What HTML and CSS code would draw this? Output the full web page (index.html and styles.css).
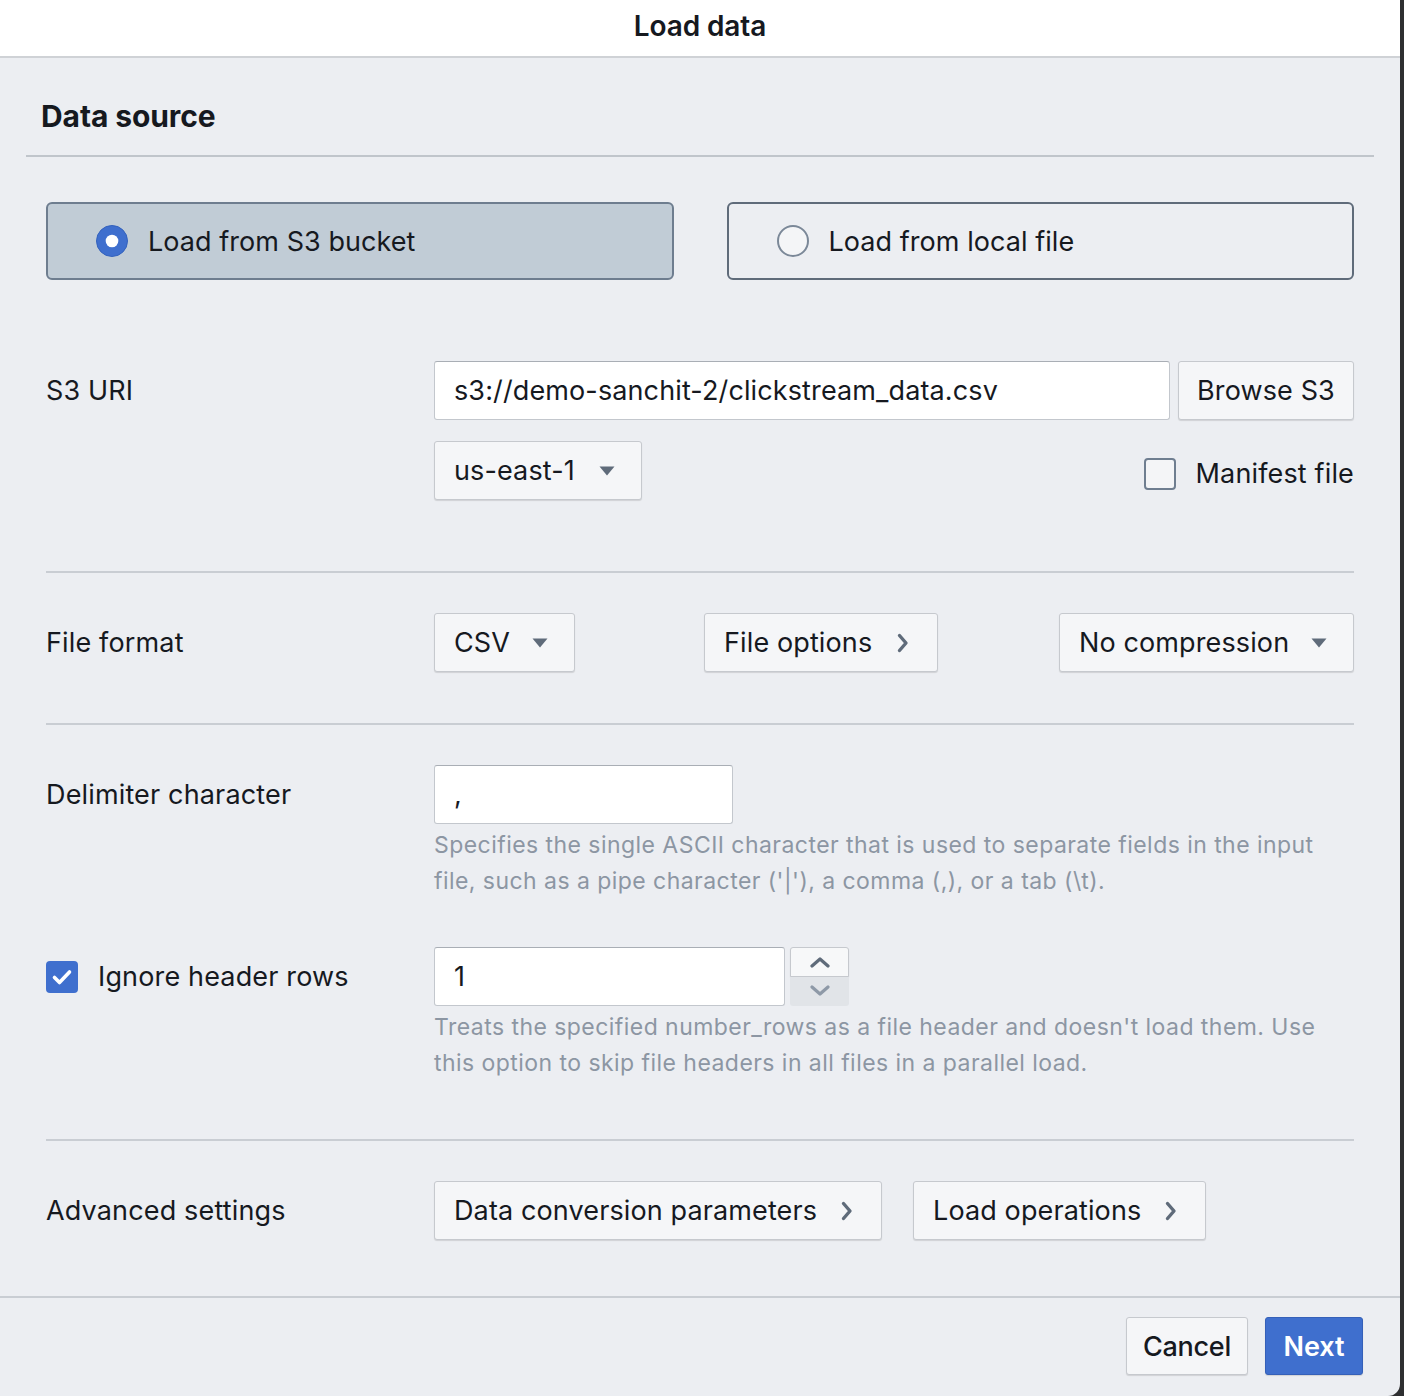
FILE: index.html
```html
<!DOCTYPE html>
<html lang="en">
<head>
<meta charset="utf-8">
<title>Load data</title>
<link rel="stylesheet" href="styles.css">
</head>
<body>
<div class="dialog">
  <header class="titlebar">Load data</header>
  <main class="content">
    <h2 class="section-title">Data source</h2>
    <div class="section-body">
      <div class="source-choice">
        <div class="choice selected">
          <svg class="radio" width="32" height="32" viewBox="0 0 32 32"><circle cx="16" cy="16" r="15.5" fill="#3f6fce" stroke="#3462bd" stroke-width="1"/><circle cx="16" cy="16" r="6.3" fill="#ffffff"/></svg>
          <span>Load from S3 bucket</span>
        </div>
        <div class="choice">
          <svg class="radio" width="32" height="32" viewBox="0 0 32 32"><circle cx="16" cy="16" r="15" fill="#f4f5f7" stroke="#7b8898" stroke-width="2"/></svg>
          <span>Load from local file</span>
        </div>
      </div>

      <div class="row row-s3">
        <div class="label">S3 URI</div>
        <div class="field">
          <div class="line">
            <div class="input uri">s3://demo-sanchit-2/clickstream_data.csv</div>
            <div class="btn browse">Browse S3</div>
          </div>
          <div class="line line-second">
            <div class="btn select region"><span>us-east-1</span>
              <svg class="caret" width="16" height="10" viewBox="0 0 16 10"><path d="M0.5 0.5h15L8 9.5z" fill="#5f6b7a"/></svg>
            </div>
            <div class="check manifest">
              <span class="box"></span>
              <span>Manifest file</span>
            </div>
          </div>
        </div>
      </div>

      <div class="divider"></div>

      <div class="row row-format">
        <div class="label">File format</div>
        <div class="field line">
          <div class="btn select csv"><span>CSV</span>
            <svg class="caret" width="16" height="10" viewBox="0 0 16 10"><path d="M0.5 0.5h15L8 9.5z" fill="#5f6b7a"/></svg>
          </div>
          <div class="btn select fileopts"><span>File options</span>
            <svg class="chev" width="12" height="20" viewBox="0 0 12 20"><path d="M2.5 2.5L9 10l-6.5 7.5" fill="none" stroke="#5f6b7a" stroke-width="3.4" stroke-linecap="round" stroke-linejoin="round"/></svg>
          </div>
          <div class="btn select compress"><span>No compression</span>
            <svg class="caret" width="16" height="10" viewBox="0 0 16 10"><path d="M0.5 0.5h15L8 9.5z" fill="#5f6b7a"/></svg>
          </div>
        </div>
      </div>

      <div class="divider"></div>

      <div class="row row-delim">
        <div class="label">Delimiter character</div>
        <div class="field">
          <div class="input delim">,</div>
          <p class="help">Specifies the single ASCII character that is used to separate fields in the input file, such as a pipe character ('|'), a comma (,), or a tab (\t).</p>
        </div>
      </div>

      <div class="row row-header">
        <div class="label">
          <div class="check">
            <span class="box checked">
              <svg width="32" height="32" viewBox="0 0 32 32"><path d="M8.5 16.5l5 5 10-10.5" fill="none" stroke="#ffffff" stroke-width="3.6" stroke-linecap="round" stroke-linejoin="round"/></svg>
            </span>
            <span>Ignore header rows</span>
          </div>
        </div>
        <div class="field">
          <div class="line">
            <div class="input number">1</div>
            <div class="spinner">
              <div class="spin up"><svg width="22" height="12" viewBox="0 0 22 12"><path d="M3 10l8-7 8 7" fill="none" stroke="#5f6b7a" stroke-width="3.2" stroke-linecap="round" stroke-linejoin="round"/></svg></div>
              <div class="spin down"><svg width="22" height="12" viewBox="0 0 22 12"><path d="M3 2l8 7 8-7" fill="none" stroke="#8e99a7" stroke-width="3.2" stroke-linecap="round" stroke-linejoin="round"/></svg></div>
            </div>
          </div>
          <p class="help">Treats the specified number_rows as a file header and doesn't load them. Use this option to skip file headers in all files in a parallel load.</p>
        </div>
      </div>

      <div class="divider"></div>

      <div class="row row-adv">
        <div class="label">Advanced settings</div>
        <div class="field line">
          <div class="btn select dataconv"><span>Data conversion parameters</span>
            <svg class="chev" width="12" height="20" viewBox="0 0 12 20"><path d="M2.5 2.5L9 10l-6.5 7.5" fill="none" stroke="#5f6b7a" stroke-width="3.4" stroke-linecap="round" stroke-linejoin="round"/></svg>
          </div>
          <div class="btn select loadops"><span>Load operations</span>
            <svg class="chev" width="12" height="20" viewBox="0 0 12 20"><path d="M2.5 2.5L9 10l-6.5 7.5" fill="none" stroke="#5f6b7a" stroke-width="3.4" stroke-linecap="round" stroke-linejoin="round"/></svg>
          </div>
        </div>
      </div>
    </div>
  </main>
  <footer class="footer">
    <div class="btn cancel">Cancel</div>
    <div class="btn primary">Next</div>
  </footer>
</div>
</body>
</html>
```

FILE: styles.css
```css
* { box-sizing: border-box; }
html, body { margin: 0; padding: 0; }
body {
  background: #2e2f31;
  font-family: "Inter", "Noto Sans", sans-serif;
  color: #16191f;
  width: 1404px;
  height: 1396px;
  overflow: hidden;
}
.dialog {
  width: 1400px;
  height: 1396px;
  background: #eceef2;
  border-bottom-right-radius: 12px;
  display: flex;
  flex-direction: column;
  overflow: hidden;
}
.titlebar {
  height: 58px;
  background: #ffffff;
  border-bottom: 2px solid #cfd2d6;
  text-align: center;
  font-weight: 600;
  font-size: 28px;
  line-height: 52px;
  letter-spacing: -0.1px;
}
.content { flex: 1; }
.section-title {
  margin: 0 26px;
  padding: 41px 0 22px 15px;
  font-size: 30px;
  line-height: 34px;
  font-weight: 700;
  letter-spacing: -0.1px;
  border-bottom: 2px solid #c0c5cb;
}
.section-body { padding: 0 46px; }
.source-choice {
  margin-top: 45px;
  display: grid;
  grid-template-columns: 1fr 1fr;
  column-gap: 53px;
}
.choice {
  height: 78px;
  border: 2px solid #5f6b7a;
  border-radius: 6px;
  display: flex;
  align-items: center;
  padding-left: 48px;
  gap: 20px;
  font-size: 27px;
  letter-spacing: 0.05px;
}
.choice.selected {
  background: #c1ccd6;
  border-color: #6e7d8f;
}
.row {
  display: grid;
  grid-template-columns: 388px 1fr;
}
.label {
  font-size: 27px;
  letter-spacing: 0.15px;
  line-height: 59px;
  height: 59px;
}
.field { min-width: 0; }
.line { display: flex; align-items: center; }
.row-s3 { margin-top: 81px; padding-bottom: 71px; }
.row-format { padding-top: 40px; padding-bottom: 51px; }
.row-delim { padding-top: 40px; }
.row-header { padding-top: 48px; padding-bottom: 58px; }
.row-adv { padding-top: 40px; }
.divider { border-top: 2px solid #c9cdd3; }

.input {
  height: 59px;
  background: #ffffff;
  border: 1px solid #c3c7cd;
  border-top-color: #a9aeb5;
  border-radius: 3px;
  font-size: 27px;
  letter-spacing: 0.12px;
  line-height: 57px;
  padding: 0 19px;
  white-space: nowrap;
}
.uri { flex: 1; }
.delim { width: 299px; }
.number { width: 351px; }
.btn {
  height: 59px;
  background: #f5f6f8;
  border: 1px solid #c6c9ce;
  border-radius: 3px;
  box-shadow: 0 1px 1px rgba(0, 0, 0, 0.12);
  font-size: 27px;
  letter-spacing: 0.12px;
  line-height: 57px;
  white-space: nowrap;
}
.browse { width: 176px; margin-left: 8px; text-align: center; }
.line-second { margin-top: 21px; justify-content: space-between; }
.select {
  display: flex;
  align-items: center;
  justify-content: space-between;
  padding: 0 26px 0 19px;
}
.region { width: 208px; }
.csv { width: 141px; }
.fileopts { width: 234px; margin-left: 129px; padding-right: 28px; }
.compress { width: 295px; margin-left: auto; }
.dataconv { width: 448px; padding-right: 28px; }
.loadops { width: 293px; margin-left: 31px; padding-right: 28px; }
.caret { flex: none; }
.chev { flex: none; }

.check {
  display: flex;
  align-items: center;
  gap: 20px;
  font-size: 27px;
  letter-spacing: 0.15px;
  line-height: 32px;
}
.manifest { margin-top: 6px; }
.check .box {
  width: 32px;
  height: 32px;
  border: 2px solid #6f7e90;
  border-radius: 4px;
  background: #f4f5f7;
  display: block;
}
.check .box.checked {
  background: #3f6fce;
  border: none;
}
.check .box.checked svg { display: block; }
.row-header .label { display: flex; align-items: center; }

.help {
  margin: 3px 0 0;
  font-size: 23px;
  letter-spacing: 0.45px;
  line-height: 36px;
  color: #8c96a3;
}
.spinner {
  width: 59px;
  height: 59px;
  margin-left: 5px;
  display: flex;
  flex-direction: column;
}
.spin {
  height: 29.5px;
  display: flex;
  align-items: center;
  justify-content: center;
}
.spin.up {
  background: #f7f8f9;
  border: 1px solid #c6c9ce;
  border-radius: 3px 3px 0 0;
  box-shadow: 0 1px 1px rgba(0, 0, 0, 0.12);
}
.spin.down {
  background: #e1e4e8;
  border-radius: 0 0 3px 3px;
}
.spin svg { display: block; }

.footer {
  height: 100px;
  border-top: 2px solid #c9cdd3;
  display: flex;
  justify-content: flex-end;
  align-items: flex-start;
  padding: 19px 37px 0 0;
  gap: 17px;
}
.cancel {
  width: 122px;
  height: 58px;
  text-align: center;
  font-weight: 500;
  letter-spacing: -0.3px;
  background: #f5f6f8;
}
.primary {
  width: 98px;
  height: 58px;
  text-align: center;
  background: #3f6fce;
  border-color: #3560b8;
  color: #ffffff;
  font-weight: 600;
  letter-spacing: 0;
}
```
